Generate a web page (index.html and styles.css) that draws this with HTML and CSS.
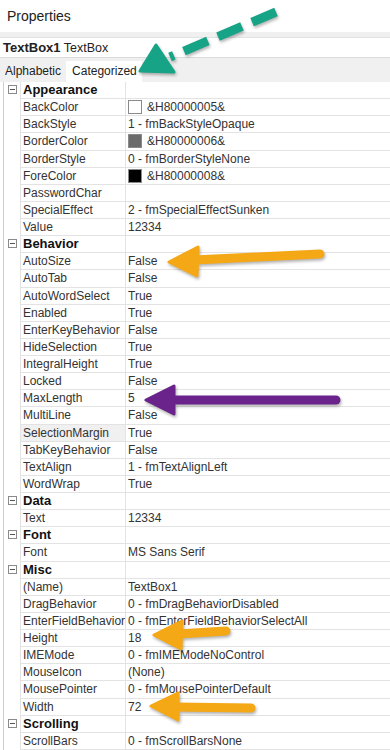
FILE: index.html
```html
<!DOCTYPE html>
<html lang="en">
<head>
    <meta charset="UTF-8">
    <meta name="viewport" content="width=device-width, initial-scale=1.0">
    <title>Properties</title>
    <link rel="stylesheet" href="styles.css">
</head>
<body>
    <div class="title">Properties</div>

    <div class="panel-head">
        <div class="combo"><b>TextBox1</b> TextBox</div>
        <div class="tabs">
            <span class="tab">Alphabetic</span>
            <span class="tab active">Categorized</span>
        </div>
    </div>

    <div class="grid">
        <div class="row cat"><span class="gutter"><i class="toggle"></i></span><span class="name">Appearance</span><span class="value"></span></div>
        <div class="row"><span class="gutter"></span><span class="name">BackColor</span><span class="value"><i class="swatch white"></i>&amp;H80000005&amp;</span></div>
        <div class="row"><span class="gutter"></span><span class="name">BackStyle</span><span class="value">1 - fmBackStyleOpaque</span></div>
        <div class="row"><span class="gutter"></span><span class="name">BorderColor</span><span class="value"><i class="swatch gray"></i>&amp;H80000006&amp;</span></div>
        <div class="row"><span class="gutter"></span><span class="name">BorderStyle</span><span class="value">0 - fmBorderStyleNone</span></div>
        <div class="row"><span class="gutter"></span><span class="name">ForeColor</span><span class="value"><i class="swatch black"></i>&amp;H80000008&amp;</span></div>
        <div class="row"><span class="gutter"></span><span class="name">PasswordChar</span><span class="value"></span></div>
        <div class="row"><span class="gutter"></span><span class="name">SpecialEffect</span><span class="value">2 - fmSpecialEffectSunken</span></div>
        <div class="row"><span class="gutter"></span><span class="name">Value</span><span class="value">12334</span></div>

        <div class="row cat"><span class="gutter"><i class="toggle"></i></span><span class="name">Behavior</span><span class="value"></span></div>
        <div class="row"><span class="gutter"></span><span class="name">AutoSize</span><span class="value">False</span></div>
        <div class="row"><span class="gutter"></span><span class="name">AutoTab</span><span class="value">False</span></div>
        <div class="row"><span class="gutter"></span><span class="name">AutoWordSelect</span><span class="value">True</span></div>
        <div class="row"><span class="gutter"></span><span class="name">Enabled</span><span class="value">True</span></div>
        <div class="row"><span class="gutter"></span><span class="name">EnterKeyBehavior</span><span class="value">False</span></div>
        <div class="row"><span class="gutter"></span><span class="name">HideSelection</span><span class="value">True</span></div>
        <div class="row"><span class="gutter"></span><span class="name">IntegralHeight</span><span class="value">True</span></div>
        <div class="row"><span class="gutter"></span><span class="name">Locked</span><span class="value">False</span></div>
        <div class="row"><span class="gutter"></span><span class="name">MaxLength</span><span class="value">5</span></div>
        <div class="row"><span class="gutter"></span><span class="name">MultiLine</span><span class="value">False</span></div>
        <div class="row"><span class="gutter"></span><span class="name selected">SelectionMargin</span><span class="value">True</span></div>
        <div class="row"><span class="gutter"></span><span class="name">TabKeyBehavior</span><span class="value">False</span></div>
        <div class="row"><span class="gutter"></span><span class="name">TextAlign</span><span class="value">1 - fmTextAlignLeft</span></div>
        <div class="row"><span class="gutter"></span><span class="name">WordWrap</span><span class="value">True</span></div>

        <div class="row cat"><span class="gutter"><i class="toggle"></i></span><span class="name">Data</span><span class="value"></span></div>
        <div class="row"><span class="gutter"></span><span class="name">Text</span><span class="value">12334</span></div>

        <div class="row cat"><span class="gutter"><i class="toggle"></i></span><span class="name">Font</span><span class="value"></span></div>
        <div class="row"><span class="gutter"></span><span class="name">Font</span><span class="value">MS Sans Serif</span></div>

        <div class="row cat"><span class="gutter"><i class="toggle"></i></span><span class="name">Misc</span><span class="value"></span></div>
        <div class="row"><span class="gutter"></span><span class="name">(Name)</span><span class="value">TextBox1</span></div>
        <div class="row"><span class="gutter"></span><span class="name">DragBehavior</span><span class="value">0 - fmDragBehaviorDisabled</span></div>
        <div class="row"><span class="gutter"></span><span class="name">EnterFieldBehavior</span><span class="value">0 - fmEnterFieldBehaviorSelectAll</span></div>
        <div class="row"><span class="gutter"></span><span class="name">Height</span><span class="value">18</span></div>
        <div class="row"><span class="gutter"></span><span class="name">IMEMode</span><span class="value">0 - fmIMEModeNoControl</span></div>
        <div class="row"><span class="gutter"></span><span class="name">MouseIcon</span><span class="value">(None)</span></div>
        <div class="row"><span class="gutter"></span><span class="name">MousePointer</span><span class="value">0 - fmMousePointerDefault</span></div>
        <div class="row"><span class="gutter"></span><span class="name">Width</span><span class="value">72</span></div>

        <div class="row cat"><span class="gutter"><i class="toggle"></i></span><span class="name">Scrolling</span><span class="value"></span></div>
        <div class="row"><span class="gutter"></span><span class="name">ScrollBars</span><span class="value">0 - fmScrollBarsNone</span></div>
    </div>

    <!-- annotation arrows drawn over the screenshot -->
    <svg class="arrows" width="390" height="750" viewBox="0 0 390 750">
        <g class="green">
            <line x1="276" y1="12" x2="170" y2="57" stroke-dasharray="26 11" />
            <polygon points="140,71 156,45 174,72" />
        </g>
        <g class="orange">
            <line x1="194" y1="260" x2="320" y2="254" />
            <polygon points="169,262 198,247 197,276" />
        </g>
        <g class="purple">
            <line x1="170" y1="400" x2="336" y2="400" />
            <polygon points="146,400 174,386 174,414" />
        </g>
        <g class="orange">
            <line x1="178" y1="634" x2="226" y2="631" />
            <polygon points="154,635 182,621 181,649" />
        </g>
        <g class="orange">
            <line x1="174" y1="707" x2="251" y2="708" />
            <polygon points="151,706 178,693 178,720" />
        </g>
    </svg>
</body>
</html>
```

FILE: styles.css
```css
body {
    margin: 0;
    position: relative;
    background: white;
    font-family: "Liberation Sans", Arial, sans-serif;
    font-size: 12px;
    color: #333;
}
.title {
    height: 32px;
    line-height: 32px;
    padding-left: 7px;
    font-size: 14px;
    color: #222;
}
.panel-head {
    background: #f0f0f0;
    padding-top: 5px;
}
.combo {
    height: 19px;
    line-height: 19px;
    background: white;
    padding-left: 3px;
    font-size: 12.5px;
    color: #222;
    border-top: 1px solid #e2e2e2;
    border-bottom: 1px solid #dadada;
}
.combo b {
    font-size: 13px;
}
.tabs {
    display: flex;
    margin-top: 3px;
    height: 21px;
}
.tab {
    line-height: 21px;
    padding: 0 5px;
    color: #222;
}
.tab.active {
    background: white;
    margin-left: 0;
    padding: 0 5px 0 6px;
}
.grid {
    margin-left: 3px;
    border-left: 1px solid #cfcfcf;
}
.row {
    display: flex;
    height: 17.13px;
}
.gutter {
    width: 16px;
    flex: none;
    display: flex;
    align-items: center;
    justify-content: center;
}
.name,
.value {
    box-sizing: border-box;
    border-bottom: 1px solid #e3e3e3;
    border-left: 1px solid #e3e3e3;
    line-height: 16px;
    white-space: nowrap;
    overflow: hidden;
}
.name {
    width: 105px;
    flex: none;
    padding-left: 2px;
}
.name.selected {
    background: #f0f0f0;
}
.value {
    flex: 1;
    padding-left: 2px;
    display: flex;
    align-items: center;
}
.cat .name {
    font-weight: bold;
    font-size: 13px;
    color: #111;
}
.toggle {
    width: 7px;
    height: 7px;
    border: 1px solid #8a8a8a;
    position: relative;
    margin-top: -2px;
}
.toggle::after {
    content: "";
    position: absolute;
    left: 1px;
    right: 1px;
    top: 3px;
    height: 1px;
    background: #555;
}
.swatch {
    width: 12px;
    height: 12px;
    border: 1px solid #8a8a8a;
    margin-right: 5px;
}
.swatch.white { background: white; }
.swatch.gray { background: #6b6b6b; }
.swatch.black { background: #000; }
.arrows {
    position: absolute;
    top: 0;
    left: 0;
    pointer-events: none;
}
.arrows g {
    filter: drop-shadow(1px 2px 1.5px rgba(0,0,0,0.3));
}
.arrows line {
    stroke-width: 9;
    stroke-linecap: round;
}
.arrows polygon {
    stroke-width: 3;
    stroke-linejoin: round;
}
.green line { stroke: #17a386; stroke-linecap: butt; }
.green polygon { fill: #17a386; stroke: #17a386; }
.orange line { stroke: #f5a815; }
.orange polygon { fill: #f5a815; stroke: #f5a815; }
.purple line { stroke: #6b238c; }
.purple polygon { fill: #6b238c; stroke: #6b238c; }
```
